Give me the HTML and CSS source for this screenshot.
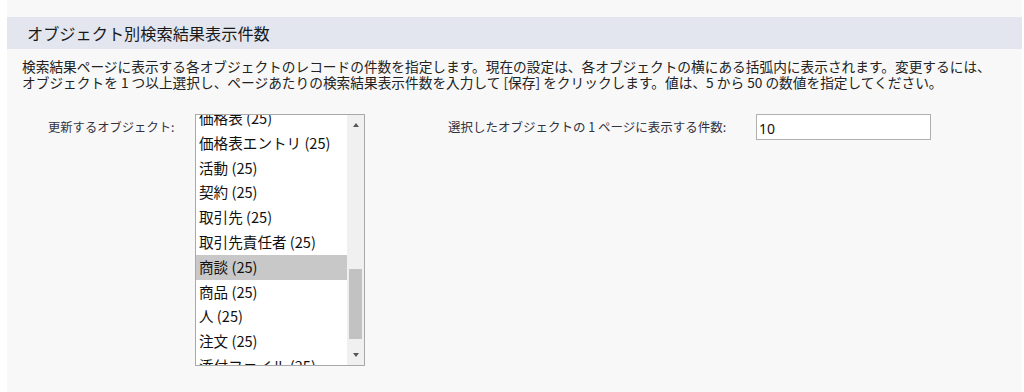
FILE: index.html
```html
<!DOCTYPE html>
<html lang="ja">
<head>
<meta charset="utf-8">
<link rel="stylesheet" href="styles.css">
</head>
<body>
<div class="panel">
  <div class="header"><h2 class="title">オブジェクト別検索結果表示件数</h2></div>
  <p class="desc"><span class="line">検索結果ページに表示する各オブジェクトのレコードの件数を指定します。現在の設定は、各オブジェクトの横にある括弧内に表示されます。変更するには、</span><span class="line">オブジェクトを 1 つ以上選択し、ページあたりの検索結果表示件数を入力して [保存] をクリックします。値は、5 から 50 の数値を指定してください。</span></p>
  <div class="form">
    <label class="label label-left">更新するオブジェクト:</label>
    <div class="listbox">
      <div class="list-view">
        <ul class="items">
          <li class="item">価格表 (25)</li>
          <li class="item">価格表エントリ (25)</li>
          <li class="item">活動 (25)</li>
          <li class="item">契約 (25)</li>
          <li class="item">取引先 (25)</li>
          <li class="item">取引先責任者 (25)</li>
          <li class="item selected">商談 (25)</li>
          <li class="item">商品 (25)</li>
          <li class="item">人 (25)</li>
          <li class="item">注文 (25)</li>
          <li class="item">添付ファイル (25)</li>
        </ul>
      </div>
      <div class="scrollbar">
        <span class="arrow up"></span>
        <div class="track"><div class="thumb"></div></div>
        <span class="arrow down"></span>
      </div>
    </div>
    <label class="label label-right">選択したオブジェクトの 1 ページに表示する件数:</label>
    <input class="count" type="text" value="10">
  </div>
</div>
</body>
</html>
```

FILE: styles.css
```css
html, body {
  margin: 0;
  padding: 0;
  background: #ffffff;
}
body {
  font-family: "Noto Sans CJK JP", "Noto Sans", sans-serif;
  color: #222222;
}
.panel {
  margin-left: 7px;
  width: 1015px;
  height: 392px;
  box-sizing: border-box;
  background: #f8f8f8;
  padding-top: 17px;
  overflow: hidden;
}
.header {
  height: 32px;
  background: #e3e6ef;
  padding-left: 20px;
  display: flex;
  align-items: center;
}
.title {
  margin: 0;
  font-size: 16.2px;
  font-weight: normal;
  color: #1a1a1a;
}
.desc {
  margin: 9px 0 0 15px;
  font-size: 13.7px;
  color: #222222;
  white-space: nowrap;
}
.line {
  display: block;
  height: 16px;
  line-height: 16px;
}
.form {
  display: flex;
  align-items: flex-start;
  margin-top: 24px;
}
.label {
  font-size: 12.3px;
  line-height: 18px;
  color: #333340;
  padding-top: 4px;
}
.label-left {
  margin-left: 41px;
  width: 147px;
}
.label-right {
  margin-left: 83px;
  width: 308px;
  font-size: 12.5px;
}
.listbox {
  width: 170px;
  height: 252px;
  box-sizing: border-box;
  border: 1px solid #a9a9a9;
  background: #ffffff;
  display: flex;
}
.list-view {
  flex: 1;
  overflow: hidden;
}
.items {
  list-style: none;
  margin: -9px 0 0 0;
  padding: 0;
}
.item {
  height: 24.8px;
  line-height: 24.8px;
  padding-left: 3px;
  font-size: 14.6px;
  color: #111111;
  white-space: nowrap;
}
.item.selected {
  background: #c8c8c8;
}
.scrollbar {
  width: 17px;
  background: #f0f0f0;
  display: flex;
  flex-direction: column;
  align-items: center;
}
.arrow {
  width: 0;
  height: 0;
  border-left: 3.5px solid transparent;
  border-right: 3.5px solid transparent;
  margin: 8px 0;
}
.arrow.up {
  border-bottom: 4px solid #555555;
}
.arrow.down {
  border-top: 4px solid #555555;
}
.track {
  flex: 1;
  width: 100%;
  display: flex;
  flex-direction: column;
  justify-content: flex-end;
  align-items: center;
  padding-bottom: 6px;
  box-sizing: border-box;
}
.thumb {
  width: 13px;
  height: 70px;
  background: #c2c2c2;
  margin-bottom: 0;
}
.count {
  width: 175px;
  height: 26px;
  box-sizing: border-box;
  border: 1px solid #b0b0b0;
  background: #ffffff;
  font-family: "Noto Sans", "Noto Sans CJK JP", sans-serif;
  font-size: 14px;
  color: #111111;
  padding: 2px 2px 0 2px;
  margin: 0;
  outline: none;
}
```
